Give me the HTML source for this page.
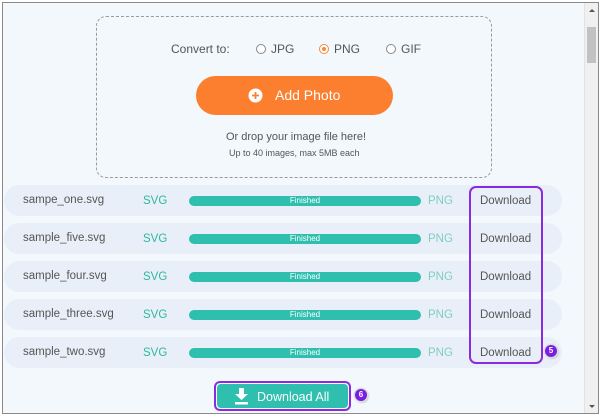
<!DOCTYPE html>
<html><head><meta charset="utf-8"><style>
*{box-sizing:border-box;margin:0;padding:0}
body{width:600px;height:418px;background:#fff;font-family:"Liberation Sans",sans-serif;position:relative;overflow:hidden}
#frame{position:absolute;left:2px;top:2px;width:597px;height:412px;border:1px solid #8a8a8a;background:#f3f8fc}
#sb{position:absolute;left:584px;top:3px;width:14px;height:410px;background:#f0f0f0;border-left:1px solid #e2e2e2}
#thumb{position:absolute;left:587px;top:27px;width:9px;height:36px;background:#c2c2c2}
.abs{position:absolute}
#drop{left:96px;top:16px;width:396px;height:162px;border:1.3px dashed #9a9a9a;border-radius:10px}
.t{color:#555;font-size:12px;white-space:nowrap}
.radio{width:10px;height:10px;border:1px solid #888;border-radius:50%;background:#fff}
#add{left:196px;top:76px;width:197px;height:39px;background:#fb7f2e;border-radius:20px;color:#fff;font-size:14px}
.row{left:4px;width:558px;height:31px;background:#e9eff8;border-radius:16px}
.row .n{position:absolute;left:19px;top:9px;color:#555;font-size:11.5px}
.row .s{position:absolute;left:139px;top:10px;color:#2fb7a0;font-size:11.5px}
.row .b{position:absolute;left:185px;top:11px;width:232px;height:10px;background:#2fbfae;border-radius:5px;color:#fff;font-size:8px;text-align:center;line-height:10px}
.row .p{position:absolute;left:424px;top:10px;color:#7fcfbf;font-size:11.5px}
.row .d{position:absolute;left:476px;top:10px;color:#555;font-size:11.5px}
.badge{width:12px;height:12px;border-radius:50%;background:#7a1fe0;color:#fff;font-size:8px;font-weight:bold;text-align:center;line-height:12px;box-shadow:0 0 0 1.5px #ddd,1px 1px 2px #888}
</style></head><body>
<div id="frame"></div>
<div id="sb"></div><div id="thumb"></div>
<div class="abs" style="left:589px;top:9px;width:0;height:0;border-left:3px solid transparent;border-right:3px solid transparent;border-bottom:3px solid #555"></div>
<div class="abs" style="left:589px;top:405px;width:0;height:0;border-left:3px solid transparent;border-right:3px solid transparent;border-top:3px solid #555"></div>
<div id="drop" class="abs"></div>
<div class="abs t" style="left:171px;top:42px">Convert to:</div>
<div class="abs radio" style="left:256px;top:44px"></div>
<div class="abs t" style="left:271px;top:42px">JPG</div>
<div class="abs radio" style="left:319px;top:44px;border-color:#f58a3a"><div style="width:4px;height:4px;border-radius:50%;background:#f58a3a;margin:2px"></div></div>
<div class="abs t" style="left:334px;top:42px">PNG</div>
<div class="abs radio" style="left:386px;top:44px"></div>
<div class="abs t" style="left:401px;top:42px">GIF</div>
<div id="add" class="abs">
<svg class="abs" style="left:52px;top:12px" width="15" height="15" viewBox="0 0 15 15"><circle cx="7.5" cy="7.5" r="7" fill="#fff"/><path d="M7.5 4v7M4 7.5h7" stroke="#fb7f2e" stroke-width="1.8"/></svg>
<div class="abs" style="left:79px;top:11px">Add Photo</div></div>
<div class="abs t" style="left:226px;top:131px;font-size:11px">Or drop your image file here!</div>
<div class="abs t" style="left:229px;top:148px;font-size:9px">Up to 40 images, max 5MB each</div>

<div class="abs row" style="top:185px"><span class="n">sampe_one.svg</span><span class="s">SVG</span><div class="b">Finished</div><span class="p">PNG</span><span class="d">Download</span></div>
<div class="abs row" style="top:223px"><span class="n">sample_five.svg</span><span class="s">SVG</span><div class="b">Finished</div><span class="p">PNG</span><span class="d">Download</span></div>
<div class="abs row" style="top:261px"><span class="n">sample_four.svg</span><span class="s">SVG</span><div class="b">Finished</div><span class="p">PNG</span><span class="d">Download</span></div>
<div class="abs row" style="top:299px"><span class="n">sample_three.svg</span><span class="s">SVG</span><div class="b">Finished</div><span class="p">PNG</span><span class="d">Download</span></div>
<div class="abs row" style="top:337px"><span class="n">sample_two.svg</span><span class="s">SVG</span><div class="b">Finished</div><span class="p">PNG</span><span class="d">Download</span></div>

<div class="abs" style="left:469px;top:186px;width:74px;height:178px;border:2px solid #8a2be2;border-radius:7px"></div>
<div class="abs badge" style="left:545px;top:345px">5</div>

<div class="abs" style="left:214px;top:381px;width:137px;height:30px;border:2px solid #8a2be2;border-radius:6px;padding:1px"><div style="width:100%;height:100%;background:#2fbfae;border-radius:4px;position:relative">
<svg class="abs" style="left:17px;top:4px" width="15" height="17" viewBox="0 0 15 17"><path d="M5 0h5v6h4l-6.5 6L1 6h4z" fill="#fff"/><rect x="1" y="14" width="13" height="2.5" fill="#fff"/></svg>
<div class="abs" style="left:40px;top:6px;color:#fff;font-size:12.5px">Download All</div></div></div>
<div class="abs badge" style="left:355px;top:389px">6</div>
</body></html>
